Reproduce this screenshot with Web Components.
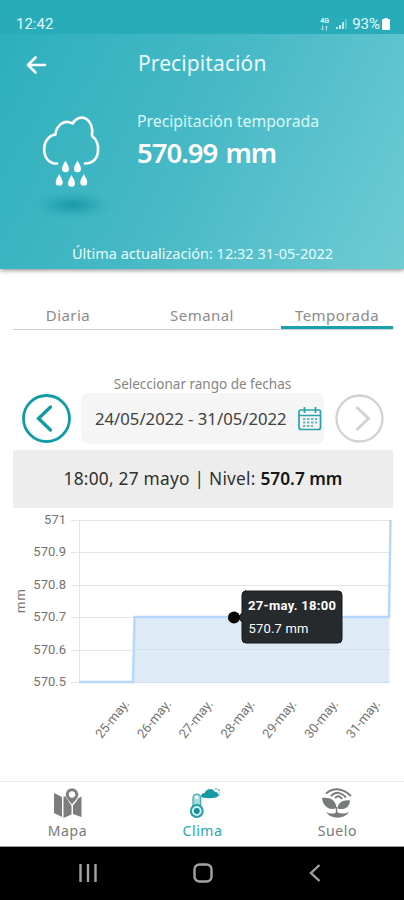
<!DOCTYPE html>
<html lang="es">
<head>
<meta charset="utf-8">
<meta name="viewport" content="width=device-width, initial-scale=1">
<title>Precipitación</title>
<style>
html, body{
    margin: 0;
    padding: 0;
    height: 100%;
    background: #fff;
    font-family: "Noto Sans", "Open Sans", sans-serif;
}
</style>
</head>
<body>
<weather-app></weather-app>

<template id="status-bar">
<style>
:host{
    position: relative;
    z-index: 1;
    display: flex;
    align-items: center;
    justify-content: space-between;
    box-sizing: border-box;
    height: 34px;
    padding: 14px 14px 0 16px;
    background: #29acb9;
    color: #e2fafc;
    font: 400 15px/20px Roboto, sans-serif;
}
.right{
    display: flex;
    align-items: center;
    font-size: 15px;
}
.net{
    display: flex;
    flex-direction: column;
    align-items: center;
    width: 11px;
    margin-right: 5px;
    font-size: 7px;
    line-height: 7px;
    font-weight: 700;
}
.signal{ margin-right: 5px; }
.battery{ margin-left: 2px; }
svg{ display: block; }
</style>
<span><slot name="time"></slot></span>
<div class="right">
    <div class="net">
        <span>4G</span>
        <svg width="9" height="6" viewBox="0 0 9 6" fill="none" stroke="#a5dfe5" stroke-width="1"><path d="M2.5 0v5M1 3.5L2.5 5 4 3.5M6.5 5.500V1M5 2.500L6.500 1 8 2.500"/></svg>
    </div>
    <svg class="signal" width="12" height="12" viewBox="0 0 12 12" fill="#c4eef2"><path d="M1 9h2v2H1zM4 7h2v4H4zM7 4h2v7H7z"/><path d="M10 1h1.500v10H10z" opacity=".5"/></svg>
    <slot name="battery"></slot>
    <svg class="battery" width="8" height="12" viewBox="0 0 8 12" fill="#fff"><path d="M2.500 0h3v1H7a1 1 0 0 1 1 1v9a1 1 0 0 1-1 1H1a1 1 0 0 1-1-1V2a1 1 0 0 1 1-1h1.500z"/></svg>
</div>
</template>

<template id="rain-header">
<style>
:host{
    display: flex;
    flex-direction: column;
    box-sizing: border-box;
    height: 236px;
    color: #e9fcfd;
    background: linear-gradient(118deg, #2eafbd 0%, #47b9c6 48%, #5cc3ce 75%, #70cbd2 100%);
    box-shadow: 0 1px 5px rgba(0, 0, 0, .5);
}
.title{
    display: grid;
    grid-template-columns: 110px 1fr;
    align-items: center;
    height: 60px;
    padding-left: 26px;
}
h1{
    margin: 0;
    padding: 0 0 2px 2px;
    font-size: 21px;
    line-height: 28px;
    font-weight: 400;
    letter-spacing: .1px;
}
.main{
    display: grid;
    grid-template-columns: 110px 1fr;
    flex: 1;
    padding: 16px 0 0 27px;
}
.info{ color: #dcf7f9; font-size: 15.8px; line-height: 22px; }
.info strong{
    display: block;
    margin-top: 5px;
    color: #fff;
    font-size: 27.5px;
    line-height: 32px;
    font-weight: 600;
    letter-spacing: -1px;
    word-spacing: 2px;
}
.updated{
    padding: 0 0 6px 1px;
    font-size: 14.5px;
    line-height: 20px;
    text-align: center;
}
svg{ display: block; }
</style>
<div class="title">
    <svg width="21" height="20" viewBox="0 0 21 20" fill="none" stroke="#fff" stroke-width="2.600" stroke-linecap="round" stroke-linejoin="round"><path d="M19 11H2.500M9.500 3.500L2 11l7.500 7.500"/></svg>
    <h1><slot name="title"></slot></h1>
</div>
<div class="main">
    <svg width="92" height="112" viewBox="27 110 92 112">
        <defs>
            <radialGradient id="shade"><stop offset="0" stop-color="#128f9f" stop-opacity=".8"/><stop offset=".45" stop-color="#1797a5" stop-opacity=".42"/><stop offset="1" stop-color="#2ba9b7" stop-opacity="0"/></radialGradient>
        </defs>
        <ellipse cx="73" cy="205" rx="42" ry="15" fill="url(#shade)"/>
        <path d="M57 163.500H54C46 161.500 43.500 154 44.300 147C45 140 50 135 55.500 134.500C56 126 64 118.500 72.500 123.500C80 112 94 118 92 136C96 139 98.500 143 98 150C98 157 94 163.500 85 163.500" fill="none" stroke="#fff" stroke-width="2.600" stroke-linecap="round" stroke-linejoin="round"/>
        <g fill="#fff">
            <path id="drop" d="M65.500 160.500c1.500 3 3.500 5.600 3.500 8.300a3.500 3.500 0 0 1-7 0c0-2.700 2-5.300 3.500-8.300z"/>
            <use href="#drop" x="12"/><use href="#drop" x="-6.300" y="13.500"/><use href="#drop" x="6" y="14.500"/><use href="#drop" x="18.300" y="13.500"/>
        </g>
    </svg>
    <div class="info"><slot name="label"></slot><strong><slot name="value"></slot></strong></div>
</div>
<div class="updated"><slot name="updated"></slot></div>
</template>

<template id="period-tabs">
<style>
:host{
    display: grid;
    grid-template-columns: 110px 158px 112px;
    margin: 33px 11px 0 13px;
    height: 27px;
    border-bottom: 1px solid #d0d0d0;
}
::slotted(span){
    color: #8b8b8b;
    font-size: 15px;
    line-height: 26px;
    text-align: center;
    letter-spacing: .45px;
}
::slotted(.active){
    box-sizing: border-box;
    height: 27px;
    border-bottom: 3px solid #1b9fa8;
}
</style>
<slot></slot>
</template>

<template id="date-range">
<style>
:host{ display: block; padding: 44px 20px 0 22px; }
p{
    margin: 0 0 0 -1px;
    text-align: center;
    color: #858585;
    font-size: 13.5px;
    line-height: 20px;
}
.row{
    display: flex;
    align-items: center;
    justify-content: space-between;
    height: 51px;
    margin-top: -1px;
}
.field{
    display: flex;
    align-items: center;
    justify-content: space-between;
    box-sizing: border-box;
    width: 243px;
    height: 51px;
    padding: 0 2px 0 14px;
    border-radius: 7px;
    background: #f5f5f5;
    color: #414141;
    font-size: 16.7px;
    margin-right: 1px;
}
svg{ display: block; }
</style>
<p><slot name="label"></slot></p>
<div class="row">
    <svg width="49" height="49" viewBox="0 0 49 49" fill="none" stroke="#109ba5"><circle cx="24.500" cy="24.500" r="23" stroke-width="2.800"/><path d="M28.500 13L16.500 24.500l12 11.500" stroke-width="3.300" stroke-linecap="round"/></svg>
    <div class="field">
        <slot name="range"></slot>
        <svg width="24" height="25" viewBox="0 0 24 25" fill="none" stroke="#2aa3ad" stroke-width="1.700"><rect x="1" y="4" width="21.500" height="19.500" rx="2"/><path d="M1 9.500h21.500M6.500 1v6M17.500 1v6"/><path d="M5 13h14M5 16.500h14M5 20h10" stroke-width="2" stroke-dasharray="2.500 1.500" opacity=".7"/></svg>
    </div>
    <svg width="49" height="49" viewBox="0 0 49 49" fill="none" stroke="#d2d2d2"><circle cx="24.500" cy="24.500" r="23" stroke-width="2.300"/><path d="M21.500 13L33.500 24.500l-12 11.500" stroke-width="3"/></svg>
</div>
</template>

<template id="reading-bar">
<style>
:host{
    display: flex;
    align-items: center;
    justify-content: center;
    height: 58px;
    margin: 6px 11px 0 13px;
    background: #ededed;
    color: #303030;
    font-size: 17.3px;
    white-space: pre;
}
::slotted(span){ letter-spacing: .25px; }
::slotted(b){ color: #161616; font-weight: 600; }
</style>
<slot></slot>
</template>

<template id="rain-chart">
<style>
:host{ display: block; height: 274px; }
svg{ display: block; font-family: Roboto, sans-serif; }
.axis{ fill: #747474; font-size: 13px; }
.tip{ fill: #fff; font-size: 13px; }
</style>
<svg width="404" height="250" viewBox="0 508 404 250">
    <g id="grid" stroke="#e4e4e4" stroke-width="1"></g>
    <path d="M133 682L134.500 617.500H389.500V682.500H133z" fill="#deebf6"/>
    <g stroke="#d0dfeb"><path d="M134 649.500H390M134 682.500H390"/></g>
    <path d="M79 682H133L134.500 617H389L390.500 520" fill="none" stroke="#b5d8fc" stroke-width="2.500"/>
    <g id="labels" class="axis"></g>
    <text class="axis" transform="translate(25 613) rotate(-90)" textLength="24">mm</text>
    <path d="M245 591H338a4 4 0 0 1 4 4V639a4 4 0 0 1-4 4H246a4 4 0 0 1-4-4V622L238 617.500 242 613V595a4 4 0 0 1 4-4z" fill="#272a2c" stroke="#15181a" stroke-width="1"/>
    <circle cx="234" cy="617.500" r="6" fill="#050505"/>
    <text class="tip" x="248" y="610" font-weight="700" textLength="88">27-may. 18:00</text>
    <text class="tip" x="248.500" y="633" textLength="60">570.7 mm</text>
</svg>
</template>

<template id="bottom-nav">
<style>
:host{
    display: grid;
    grid-template-columns: repeat(3, 135px);
    justify-content: center;
    box-sizing: border-box;
    height: 67px;
    border-top: 1px solid #eee;
    border-bottom: 1px solid #999;
}
</style>
<slot></slot>
</template>

<template id="nav-item">
<style>
:host{
    display: flex;
    flex-direction: column;
    align-items: center;
    padding: 5px 0 0 1px;
    color: #77797b;
    font-size: 14px;
    line-height: 20px;
    letter-spacing: .6px;
}
:host([active]){ color: #2ba5af; }
span{ margin-top: 2px; }
::slotted(svg){ display: block; }
</style>
<slot name="icon"></slot>
<span><slot></slot></span>
</template>

<template id="system-keys">
<style>
:host{
    display: flex;
    justify-content: space-between;
    align-items: center;
    box-sizing: border-box;
    height: 53px;
    padding: 0 83px 2px 79px;
    background: #000;
}
</style>
<svg width="18" height="18" viewBox="0 0 18 18" stroke="#a3a3a3" stroke-width="2.400"><path d="M1.500 0v18M9 0v18M16.500 0v18"/></svg>
<svg width="20" height="20" viewBox="0 0 20 20" fill="none" stroke="#a3a3a3" stroke-width="2.400"><rect x="1.500" y="1.500" width="17" height="17" rx="5"/></svg>
<svg width="12" height="18" viewBox="0 0 12 18" fill="none" stroke="#a3a3a3" stroke-width="2.400"><path d="M10.500 1L2 9l8.500 8"/></svg>
</template>

<template id="weather-app">
<style>
:host{
    display: flex;
    flex-direction: column;
    width: 404px;
    height: 900px;
    overflow: hidden;
}
</style>
<status-bar><span slot="time">12:42</span><span slot="battery">93%</span></status-bar>
<rain-header>
    <span slot="title">Precipitación</span>
    <span slot="label">Precipitación temporada</span>
    <span slot="value">570.99 mm</span>
    <span slot="updated">Última actualización: 12:32 31-05-2022</span>
</rain-header>
<period-tabs><span>Diaria</span><span>Semanal</span><span class="active">Temporada</span></period-tabs>
<date-range><span slot="label">Seleccionar rango de fechas</span><span slot="range">24/05/2022 - 31/05/2022</span></date-range>
<reading-bar><span>18:00, 27 mayo | Nivel: </span><b>570.7 mm</b></reading-bar>
<rain-chart></rain-chart>
<bottom-nav>
    <nav-item>
        <svg slot="icon" width="30" height="32" viewBox="0 0 30 32" fill="#7b7d7f"><path d="M1 6l8 4v20l-8-4zM10.500 10l3-1.500C14 13 17 16 18.500 19v8.500l-8 3.500zM20 18.500c2-2.500 4-4.500 5-7l3.500-2V30L20 27z"/><path fill-rule="evenodd" stroke="#fff" stroke-width=".6" d="M19 1a6.500 6.500 0 0 1 6.500 6.500C25.500 12 20 15.500 19 18 18 15.500 12.500 12 12.500 7.500A6.500 6.500 0 0 1 19 1zm0 3.500a3 3 0 1 0 0 6 3 3 0 0 0 0-6z"/></svg>
        Mapa
    </nav-item>
    <nav-item active>
        <svg slot="icon" width="34" height="32" viewBox="0 0 34 32"><path d="M7 20V11a3.800 3.800 0 0 1 7.600 0v9" fill="#a8d9dd" stroke="#45adb5" stroke-width="1.300"/><circle cx="10.800" cy="10.500" r="1.600" fill="#fff"/><circle cx="10.800" cy="24" r="5.900" fill="#d5f0f1" stroke="#229daa" stroke-width="2"/><circle cx="10.800" cy="24" r="2.900" fill="#128f9b"/><path d="M16.500 10.500c-3-1-1-4.500 2-4.500 2-5 8.500-5 10.500-1 4-.5 5 4.500 1 5.500q-7 1.500-13.500 0z" fill="#169aa6"/><path d="M29 2c5-.5 7 4 3 7" fill="none" stroke="#58b7bd" stroke-width="1.300" stroke-dasharray="2 1"/></svg>
        Clima
    </nav-item>
    <nav-item>
        <svg slot="icon" width="34" height="32" viewBox="0 0 34 32" fill="#777b7c"><path d="M5 6.500Q17-3 30 9M10 9Q17 2 25 10.500M14 11Q18 7 21 12" fill="none" stroke="#777b7c" stroke-width="2"/><path d="M1 11c8-1 14 2 14.500 10C9 24 2 20 1 11zM29 13.500c-7-1-12 2-12.500 8 7 2 12-1 12.500-8zM5 25c4 2 8 2 11 0 4 2 8 2 12 0-4 7-18 8-23 0z"/><path d="M15.500 20v6" stroke="#777b7c" stroke-width="1.500"/></svg>
        Suelo
    </nav-item>
</bottom-nav>
<system-keys></system-keys>
</template>

<script>
class TemplateElement extends HTMLElement{
    constructor(){
        super();
        this.attachShadow({mode: 'open'});
        const template = document.getElementById(this.localName);
        this.shadowRoot.append(template.content.cloneNode(true));
    }
}

class RainChart extends TemplateElement{
    connectedCallback(){
        const levels = ['571', '570.9', '570.8', '570.7', '570.6', '570.5'];
        let lines = '<path d="M79.5 520V683"/>';
        let labels = '';

        levels.forEach((level, i) => {
            const y = 520 + i * 32.4;
            lines += `<path d="M71 ${Math.round(y) + .5}H390"/>`;
            labels += `<text x="66" y="${y + 4}" text-anchor="end">${level}</text>`;
        });

        // one tick per day, 25 to 31
        for(let i = 0; i < 7; i++){
            labels += `<text text-anchor="end" transform="translate(${130 + i * 41.8} 704) rotate(-51)">${25 + i}-may.</text>`;
        }

        this.shadowRoot.querySelector('#grid').innerHTML = lines;
        this.shadowRoot.querySelector('#labels').innerHTML = labels;
    }
}

customElements.define('rain-chart', RainChart);
['status-bar', 'rain-header', 'period-tabs', 'date-range', 'reading-bar', 'nav-item', 'bottom-nav', 'system-keys', 'weather-app'].forEach(name => {
    customElements.define(name, class extends TemplateElement{});
});
</script>
</body>
</html>
